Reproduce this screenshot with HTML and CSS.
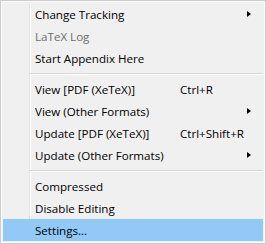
FILE: index.html
```html
<!DOCTYPE html>
<html lang="en">
<head>
    <meta charset="UTF-8">
    <meta name="viewport" content="width=device-width, initial-scale=1.0">
    <title>Menu</title>
    <link rel="stylesheet" href="styles.css">
</head>
<body>
    <div class="menu">
        <div class="menu-body">
            <div class="item"><span class="label">Change Tracking</span><span class="keys"></span><span class="arrow"></span></div>
            <div class="item disabled"><span class="label">LaTeX Log</span></div>
            <div class="item"><span class="label">Start Appendix Here</span></div>
            <div class="sep"></div>
            <div class="item"><span class="label">View [PDF (XeTeX)]</span><span class="keys">Ctrl+R</span></div>
            <div class="item"><span class="label">View (Other Formats)</span><span class="keys"></span><span class="arrow"></span></div>
            <div class="item"><span class="label">Update [PDF (XeTeX)]</span><span class="keys">Ctrl+Shift+R</span></div>
            <div class="item"><span class="label">Update (Other Formats)</span><span class="keys"></span><span class="arrow"></span></div>
            <div class="sep"></div>
            <div class="item"><span class="label">Compressed</span></div>
            <div class="item"><span class="label">Disable Editing</span></div>
            <div class="item active"><span class="label">Settings...</span></div>
        </div>
    </div>
</body>
</html>
```

FILE: styles.css
```css
/* Page */
body {
    margin: 0;
    font-family: 'Open Sans', 'Noto Sans', sans-serif;
    font-size: 11.6px;
    color: #000;
}

/* Popup menu frame */
.menu {
    width: 260px;
    height: 238px;
    border: 1px solid #cccccc;
    background: #f0f0f0;
    box-shadow: inset 1px 1px 0 #fbfbfb, inset -1px -1px 0 #fbfbfb;
    padding: 2px;
}

/* Content with the icon gutter line */
.menu-body {
    background:
        linear-gradient(to right, transparent 26px, #e2e2e2 26px, #e2e2e2 27px, #ffffff 27px, #ffffff 28px, transparent 28px);
}

/* Rows */
.item {
    display: grid;
    grid-template-columns: 145px 1fr 18px;
    align-items: center;
    height: 22px;
    padding-left: 32px;
    white-space: nowrap;
}

.item.disabled { color: #6d6d6d; }

.item.active { background: #91c9f7; }

/* Submenu triangle */
.arrow {
    width: 0;
    height: 0;
    margin-left: 2px;
    border-top: 3.5px solid transparent;
    border-bottom: 3.5px solid transparent;
    border-left: 4px solid #000;
}

/* Separator */
.sep {
    height: 1px;
    margin: 4px 0 3px 27px;
    background: #d7d7d7;
    border-bottom: 1px solid #ffffff;
}
```
